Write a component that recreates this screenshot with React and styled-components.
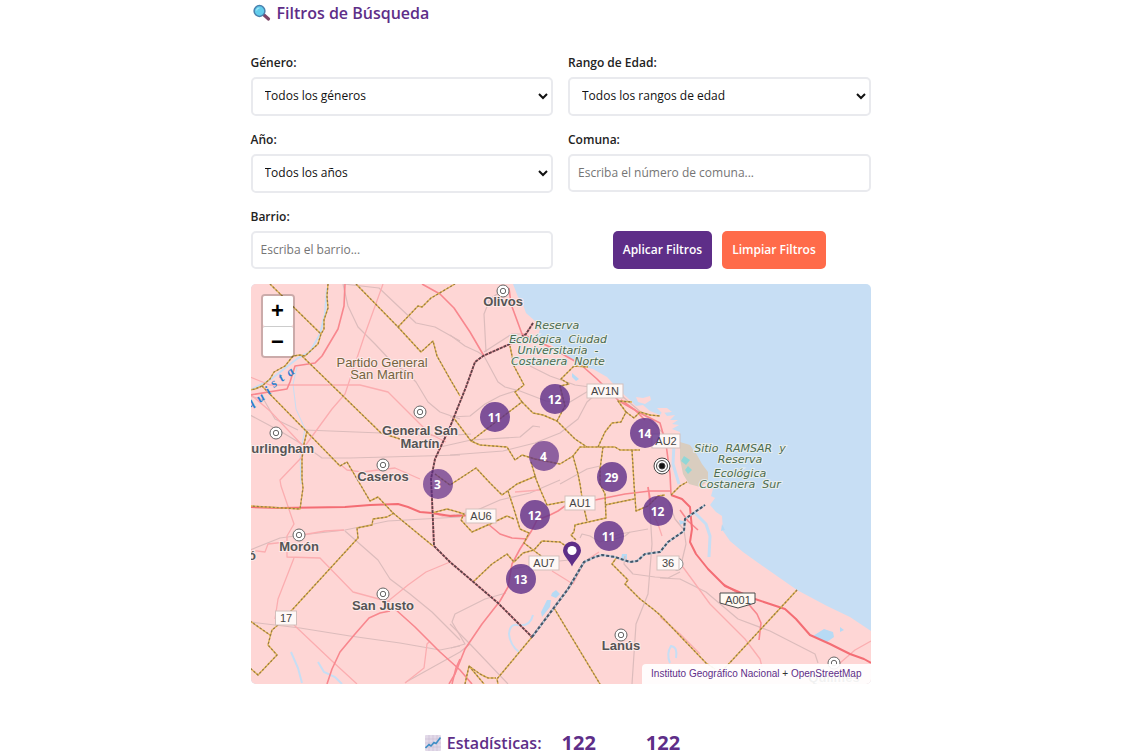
import React from 'react'
import styled, { createGlobalStyle } from 'styled-components'

const towns = [
  { x: 252, y: 7, lines: [['Olivos', 252, 22]] },
  { x: 169, y: 128, lines: [['General San', 169, 151], ['Martín', 169, 164]] },
  { x: 132, y: 181, lines: [['Caseros', 132, 197]] },
  { x: 25, y: 149, lines: [['Hurlingham', 27, 169]] },
  { x: 48, y: 251, lines: [['Morón', 48, 267]] },
  { x: 132, y: 310, lines: [['San Justo', 132, 326]] },
  { x: 370, y: 351, lines: [['Lanús', 370, 366]] },
  { x: 583, y: 379, lines: [['Quilmes', 583, 398]] }
]

const reserves = [
  ['Reserva', 307, 45],
  ['Ecológica  Ciudad', 308, 59],
  ['Universitaria  -', 308, 70],
  ['Costanera  Norte', 308, 81],
  ['Sitio  RAMSAR  y', 490, 168],
  ['Reserva', 490, 179],
  ['Ecológica', 490, 193],
  ['Costanera  Sur', 490, 204]
]

const shields = [
  { text: 'AV1N', x: 355, y: 107, width: 36 },
  { text: 'AU2', x: 416, y: 157, width: 28 },
  { text: 'AU1', x: 330, y: 219, width: 30 },
  { text: 'AU6', x: 231, y: 232, width: 30 },
  { text: 'AU7', x: 294, y: 279, width: 30 },
  { text: '17', x: 36, y: 334, width: 21 },
  { text: '36', x: 418, y: 279, width: 22 }
]

const river = [
  ['q', 0, 124],
  ['u', 10, 119],
  ['i', 19, 111],
  ['s', 24, 104],
  ['t', 32, 98],
  ['a', 40, 93]
]

const clusters = [
  { count: 12, x: 305, y: 115 },
  { count: 11, x: 245, y: 133 },
  { count: 4, x: 294, y: 172, light: true },
  { count: 14, x: 395, y: 149 },
  { count: 3, x: 188, y: 200, light: true },
  { count: 29, x: 362, y: 193 },
  { count: 12, x: 285, y: 231 },
  { count: 12, x: 408, y: 227 },
  { count: 11, x: 359, y: 252 },
  { count: 13, x: 271, y: 295 }
]

const rails = [
  'M93 0L98 22L108 43L125 60L140 76L158 90L166 98L178 118L190 128L210 135',
  'M93 0L129 4L148 22L166 39L185 43L210 57',
  'M200 51L215 62L228 68L234 72',
  'M236 68L234 30L240 15L250 8',
  'M234 68L262 50L275 50',
  'M234 72L248 98L255 103L270 107L296 117L320 118L340 106L355 112',
  'M0 131L30 147L55 162L72 174L100 174L210 171',
  'M0 112L14 116L25 135L48 146',
  'M55 146L131 149L190 152L221 150',
  'M200 133L220 132L235 120L250 112L265 107',
  'M190 163L221 156L270 153L283 142L290 143',
  'M200 171L253 167L285 159L310 149L328 135L337 118L355 102',
  'M280 82L300 92L325 101L355 105L372 112L400 136L414 150',
  'M310 200L337 185L350 182',
  'M0 266L30 254L60 250L95 246L138 237L210 233',
  'M200 232L225 227L250 216L280 209L310 196',
  'M95 247L128 276L140 295L160 310L182 328L210 356',
  'M0 338L50 344L100 352L150 359L190 366L210 362',
  'M156 398L210 368L220 360',
  'M256 309L235 315L205 330L202 338L215 360L201 364',
  'M200 340L220 360L258 400',
  'M330 254L332 250L340 252L350 258L370 250L398 245',
  'M355 258L375 252L380 248',
  'M399 210L402 260L398 310L386 340L382 400',
  'M375 272L374 280L383 290L405 293L418 294L430 288',
  'M410 211L418 216L425 235L434 246L436 260L430 285',
  'M410 294L430 295L456 308L488 335L520 347L565 370L568 379',
  'M262 285L300 278L319 276L324 270'
]

const minorRoads = [
  'M133 0L115 50L95 110L82 125L55 162',
  'M0 93L20 101L110 101L138 108L160 130L180 150L196 158',
  'M0 110L20 127L53 162',
  'M55 162L51 174L30 196L31 202L44 240L37 252L37 273L70 274L103 308L140 318',
  'M44 274L28 315L25 335',
  'M44 341L82 377L107 400',
  'M137 318L158 301L176 288L200 278',
  'M155 399L174 384L177 360L180 357',
  'M91 181L97 186L112 188L145 184L170 195',
  'M52 251L75 247L94 246',
  'M0 266L15 268L18 260L36 258',
  'M302 287L315 295L323 300L334 278L349 268',
  'M430 279L460 320L495 355L510 375L512 383',
  'M410 333L430 350L450 370',
  'M590 379L605 366L621 357',
  'M205 231L192 232L182 229',
  'M290 206L265 208',
  'M412 252L408 240L400 225L398 203'
]

const majorRoads = [
  'M172 0L190 10L204 24L220 48L234 72',
  'M259 4L261 20L272 50L300 63L330 80L347 95L369 117L392 130L410 139L416 160L420 190L421 210',
  'M95 0L94 22L88 45L72 72L65 79L45 82L40 98L37 105L0 111',
  'M371 116L385 126L395 136',
  'M238 240L250 250L262 254L277 255',
  'M282 246L287 236L300 231L308 227L315 222L345 216L375 210L400 207L421 207',
  'M282 246L270 265L262 280L258 303L250 317L232 340L215 365L205 390L199 400',
  'M140 327L130 329L119 334L105 350L90 368L82 385L77 400',
  'M145 325L165 343L190 368L210 386L222 400',
  'M210 375L206 384L202 400',
  'M398 203L401 220',
  'M430 226L438 237L448 246',
  'M473 300L490 310L507 330L511 339L509 356'
]

const highways = [
  'M0 223L30 224L95 223L120 221L148 220L158 223L170 228L182 229L200 232L232 231',
  'M421 211L432 215L440 223L442 245L440 258L446 270L458 285L475 302L505 315L535 325L546 335L560 351L580 360L600 370L614 375L621 379'
]

const boundaries = [
  'M20 0L71 50',
  'M78 0L77 12L78 24L74 36L74 45L71 50L68 60L55 72L50 71L43 72L35 82L24 88L20 95L12 102L5 105L0 106',
  'M52 72L131 149L150 155',
  'M12 102L57 148L90 182L97 178L110 200L120 217L128 213L143 229L183 262',
  'M57 147L54 160L52 175L52 195L53 204L50 225L0 222',
  'M106 0L148 43L171 68L183 57L187 72L200 95L210 112',
  'M148 43L168 22L172 23L181 14L205 0',
  'M144 229L137 233L123 235L122 241L107 244L108 254L42 326L28 341L22 346L20 353L18 361L27 371L8 391L0 384',
  'M0 337L20 351',
  'M182 229L197 225L208 228L214 230L211 236L222 248L240 240L257 232L264 235',
  'M203 133L221 157L230 161L257 163L265 176L272 171L285 175L310 180L323 172L330 163L365 163L370 166L390 166',
  'M221 157L272 118L265 108L274 101L264 82L260 62',
  'M272 118L283 129L293 131L307 137L325 155L337 163',
  'M307 137L315 122L310 102L319 100L311 95L324 82L338 83',
  'M348 163L355 148L362 139L371 138L376 128L368 117L382 118',
  'M376 128L384 134L390 128L400 131L410 132',
  'M353 163L350 185L350 200L355 210L356 234L325 241L324 248L321 251L326 256',
  'M382 166L384 200L386 227L398 222L408 212L415 211',
  'M323 172L328 190L330 200L333 220L337 237',
  'M281 178L286 195L290 205L297 221L313 218L340 214',
  'M185 190L200 201L226 184L240 199L252 211L267 200L286 192',
  'M258 207L263 222L270 245L279 249L274 259L295 275',
  'M223 298L242 280L257 270L264 278L273 269L284 266L292 257L310 258L320 265',
  'M355 221L384 215',
  'M421 211L430 202L437 198',
  'M367 273L362 280L378 296L375 300L390 315L403 325L410 331L456 379L465 385',
  'M282 353L247 395L248 400',
  'M304 324L350 400',
  'M547 306L474 385',
  'M215 400L219 382L230 390L238 394L246 394',
  'M219 382L234 400'
]

const cityLimit = 'M283 39L276 50L260 60L233 72L225 78L216 103L200 143L185 175L181 195L182 215L184 262L200 278L248 319L282 353L318 305L334 278'
const cityRiver = 'M282 353L318 305L334 278L345 273L352 271L365 273L380 278L387 277L395 270L410 268L418 258L434 247L435 235L455 221'

export default function App() {
  return (
    <Page>
      <GlobalStyle />
      <Container>
        <Title>
          <SearchIcon />
          Filtros de Búsqueda
        </Title>
        <Filters onSubmit={e => e.preventDefault()}>
          <Field>
            <Label htmlFor="genero">Género:</Label>
            <Select id="genero">
              <option>Todos los géneros</option>
            </Select>
          </Field>
          <Field>
            <Label htmlFor="edad">Rango de Edad:</Label>
            <Select id="edad">
              <option>Todos los rangos de edad</option>
            </Select>
          </Field>
          <Field>
            <Label htmlFor="anio">Año:</Label>
            <Select id="anio">
              <option>Todos los años</option>
            </Select>
          </Field>
          <Field>
            <Label htmlFor="comuna">Comuna:</Label>
            <Input id="comuna" placeholder="Escriba el número de comuna..." />
          </Field>
          <Field>
            <Label htmlFor="barrio">Barrio:</Label>
            <Input id="barrio" placeholder="Escriba el barrio..." />
          </Field>
          <Actions>
            <Button type="submit">Aplicar Filtros</Button>
            <Button type="reset" $secondary>Limpiar Filtros</Button>
          </Actions>
        </Filters>
        <MapBox>
          <Tiles />
          {clusters.map((c, i) => (
            <Cluster key={i} $x={c.x - 311} $y={c.y - 200} $light={c.light}>{c.count}</Cluster>
          ))}
          <Pin />
          <ZoomControl>
            <ZoomButton aria-label="Acercar">+</ZoomButton>
            <ZoomButton aria-label="Alejar">−</ZoomButton>
          </ZoomControl>
          <Attribution>
            <a href="#ign">Instituto Geográfico Nacional</a> + <a href="#osm">OpenStreetMap</a>
          </Attribution>
        </MapBox>
        <Stats>
          <StatsTitle>
            <ChartIcon />
            Estadísticas:
          </StatsTitle>
          <StatsNumbers>
            <strong>122</strong>
            <strong>122</strong>
          </StatsNumbers>
        </Stats>
      </Container>
    </Page>
  )
}

function SearchIcon() {
  return (
    <svg width="18" height="18" viewBox="0 0 18 18" aria-hidden="true">
      <path d="M11 11L15.5 15" stroke="#7d4668" strokeWidth="3.2" strokeLinecap="round" />
      <circle cx="6.5" cy="7" r="5.4" fill="#62cdec" stroke="#4a80ad" strokeWidth="1.5" />
      <path d="M3.5 6.5Q4 4 6.5 4" fill="none" stroke="#a5e6f7" strokeWidth="1.2" />
    </svg>
  )
}

function ChartIcon() {
  return (
    <svg width="16" height="16" viewBox="0 0 16 16" aria-hidden="true">
      <rect width="16" height="16" rx="1" fill="#e2d9e8" />
      <path d="M0 4H16M0 8H16M0 12H16M4 0V16M8 0V16M12 0V16" stroke="#cbbdd5" strokeWidth="0.6" />
      <path d="M0.5 13L4 9.5L6 11L9 7.5L11 8.5L15.5 2.5" fill="none" stroke="#3f8fc6" strokeWidth="1.6" />
    </svg>
  )
}

function Pin() {
  return (
    <PinButton aria-label="Ubicación">
      <svg width="20" height="26" viewBox="0 0 20 26" aria-hidden="true">
        <path d="M10 25.5C8 20 1 15 1 9.5A9 9 0 0 1 19 9.5C19 15 12 20 10 25.5Z" fill="#5e2e88" />
        <circle cx="10" cy="9.5" r="4.6" fill="#fff" />
      </svg>
    </PinButton>
  )
}

function Tiles() {
  return (
    <TileSvg viewBox="1 0 620 400" preserveAspectRatio="xMidYMid slice">
      <rect x="-400" y="-200" width="1421" height="800" fill="#c7def4" />
      <path
        fill="#fed6d5"
        d="M-400-200H263V0L268 13L272 18L276 29L285 37L291 41L288 52L303 62L318 73L330 82L343 85L357 93L370 107L380 116L386 122L393 121L400 127L410 131L413 127L417 132L425 131L420 136L428 136L422 140L429 141L422 145L430 148L430 160L434 185L442 196L458 199L463 205L461 212L465 214L460 221L466 228L472 232L473 247L480 257L493 268L517 285L547 306L577 322L600 333L621 347V600H-400Z"
      />
      <path d="M386 113L393 114L400 112L401 116L395 120L388 118ZM407 124L417 124L422 128L412 129Z" fill="#fed6d5" />
      <path d="M430 158L440 161L447 171L452 180L458 188L458 197L450 203L439 200L433 190L430 175Z" fill="#d9cdbf" />
      <path d="M434 172L440 176L436 181L431 177ZM438 182L442 186L438 190L435 186Z" fill="#91d7d7" />
      <g fill="none" stroke="#c7def4" strokeWidth="2">
        <path d="M77 4L75 30L70 50L60 68L48 74L20 96L0 106" />
        <path d="M47 83L43 100L46 125L55 145L50 172L51 200" strokeWidth="1" />
        <path d="M283 331Q280 343 268 341Q260 339 259 350Q260 361 269 368" />
        <path d="M41 368L48 384L52 399M68 378L74 388L85 393L92 400" />
        <path d="M444 228L456 240L460 252L459 273" strokeWidth="3" />
        <path d="M424 160L423 180L429 200" strokeWidth="3" />
        <path d="M420 379Q416 370 421 362Q428 363 426 374" />
      </g>
      <g fill="#b7daf4">
        <path d="M302 309L306 306L310 310L306 314L301 312ZM297 316L301 316L300 323L296 328L292 333L291 328Z" />
        <path d="M322 89L329 95L326 97L322 93ZM372 270L377 270L377 275L371 275ZM429 236L436 238L430 241Z" />
        <path d="M563 352L574 345L583 348L584 353L577 358ZM590 343L594 346L590 348ZM472 240L475 246L471 247Z" />
      </g>
      <g fill="none" strokeLinejoin="round">
        {rails.map(d => <path key={d} d={d} stroke="#dcbcbc" strokeWidth="1.2" />)}
        {minorRoads.map(d => <path key={d} d={d} stroke="#fbadb0" strokeWidth="1.3" />)}
        {majorRoads.map(d => <path key={d} d={d} stroke="#f8878e" strokeWidth="1.6" />)}
        {highways.map(d => <path key={d} d={d} stroke="#f46d74" strokeWidth="2" />)}
        {boundaries.map(d => (
          <g key={d}>
            <path d={d} stroke="#dfb14f" strokeWidth="1.4" />
            <path d={d} stroke="#957a48" strokeWidth="1.2" strokeDasharray="2 2" />
          </g>
        ))}
        <path d={cityLimit} stroke="#f39aa1" strokeWidth="2" />
        <path d={cityLimit} stroke="#5b4248" strokeWidth="1.8" strokeDasharray="3 1" />
        <path d={cityRiver} stroke="#b9cbd9" strokeWidth="2" />
        <path d={cityRiver} stroke="#42566a" strokeWidth="2" strokeDasharray="3 2" />
      </g>
      {towns.map(t => (
        <g key={t.lines[0][0]}>
          <circle cx={t.x + 1} cy={t.y} r="6" fill="#fff" stroke="#666" />
          <circle cx={t.x + 1} cy={t.y} r="2.7" fill="none" stroke="#666" />
          {t.lines.map(([text, x, y]) => <Town key={text} x={x + 1} y={y}>{text}</Town>)}
        </g>
      ))}
      <Town x="2" y="276">ó</Town>
      <Party x="132" y="83">Partido General</Party>
      <Party x="132" y="95">San Martín</Party>
      {reserves.map(([text, x, y]) => <Reserve key={y} x={x} y={y}>{text}</Reserve>)}
      {river.map(([text, x, y]) => (
        <River key={text} transform={`translate(${x} ${y}) rotate(-38)`}>{text}</River>
      ))}
      <circle cx="427" cy="280" r="6" fill="#fff" stroke="#888" />
      {shields.map(s => (
        <g key={s.text}>
          <rect x={s.x - s.width / 2} y={s.y - 7} width={s.width} height="14" fill="#fff8f6" stroke="#d3bfbc" />
          <Shield x={s.x} y={s.y + 4}>{s.text}</Shield>
        </g>
      ))}
      <path d="M470 309H505V319L488 324L470 319Z" fill="#fffaf3" stroke="#4b4b4b" />
      <Shield x="488" y="320">A001</Shield>
      <g stroke="#444">
        <circle cx="412" cy="182" r="8" fill="#fff" />
        <circle cx="412" cy="182" r="5.5" fill="#fff" />
        <circle cx="412" cy="182" r="3" fill="#111" />
      </g>
    </TileSvg>
  )
}

const GlobalStyle = createGlobalStyle`
  * {
    box-sizing: border-box;
  }

  body {
    margin: 0;
    background: #fff;
    font-family: 'Open Sans', sans-serif;
    font-size: 12px;
    color: #222;
  }
`

const Page = styled.main`
  display: flex;
  justify-content: center;
  padding: 0 18px 0 8px;
`

const Container = styled.div`
  width: 100%;
  max-width: 620px;
`

const Title = styled.h2`
  display: flex;
  align-items: center;
  gap: 6px;
  margin: 0 0 28px;
  padding-left: 2px;
  font-size: 16px;
  font-weight: 600;
  line-height: 26px;
  color: #5e2e88;
`

const Filters = styled.form`
  display: grid;
  grid-template-columns: 1fr 1fr;
  gap: 15px;
  margin-bottom: 15px;

  @media screen and (max-width: 560px) {
    grid-template-columns: 1fr;
  }
`

const Field = styled.div`
  display: flex;
  flex-direction: column;
  gap: 5px;
`

const Label = styled.label`
  font-weight: 600;
  line-height: 18px;
`

const Input = styled.input`
  width: 100%;
  height: 38px;
  padding: 7px 8px 9px;
  border: 2px solid #e9eaee;
  border-radius: 5px;
  background: #fff;
  font-family: inherit;
  font-size: 12px;
  font-weight: 400;
  color: #111;

  &::placeholder {
    color: #757575;
  }
`

const Select = styled(Input).attrs({ as: 'select' })`
  height: 39px;
`

const Actions = styled.div`
  display: flex;
  justify-content: center;
  align-items: flex-end;
  gap: 10px;
`

const Button = styled.button`
  height: 38px;
  padding: 0 10px 2px;
  border: 0;
  border-radius: 5px;
  background: ${props => (props.$secondary ? '#ff6b4a' : '#5e2e88')};
  color: #fff;
  font-family: inherit;
  font-size: 12px;
  font-weight: 600;
  cursor: pointer;
`

const MapBox = styled.section`
  position: relative;
  height: 400px;
  overflow: hidden;
  border-radius: 5px;
`

const TileSvg = styled.svg`
  display: block;
  width: 100%;
  height: 100%;
`

const Town = styled.text`
  font: bold 13px 'Liberation Sans', sans-serif;
  text-anchor: middle;
  fill: #555;
  stroke: #fde9e8;
  stroke-width: 2px;
  paint-order: stroke;
`

const Party = styled(Town)`
  font-weight: normal;
  fill: #75643f;
`

const Reserve = styled.text`
  font: italic 11px 'DejaVu Sans', sans-serif;
  text-anchor: middle;
  white-space: pre;
  fill: #4b6b50;
  stroke: #e8eeec;
  stroke-width: 2px;
  paint-order: stroke;
`

const River = styled.text`
  font: italic bold 13px 'Liberation Serif', serif;
  fill: #2d7fcf;
`

const Shield = styled.text`
  font: 11px 'Liberation Sans', sans-serif;
  text-anchor: middle;
  fill: #444;
`

const Cluster = styled.button`
  position: absolute;
  top: calc(50% + ${props => props.$y}px - 15px);
  left: calc(50% + ${props => props.$x}px - 15px);
  width: 30px;
  height: 30px;
  padding: 0;
  border: 0;
  border-radius: 50%;
  background: ${props => (props.$light ? 'rgba(94, 46, 136, 0.7)' : 'rgba(94, 46, 136, 0.8)')};
  color: #fff;
  font: bold 12px 'Open Sans', sans-serif;
  cursor: pointer;
`

const PinButton = styled.button`
  position: absolute;
  top: calc(50% + 57px);
  left: calc(50% + 1px);
  padding: 0;
  border: 0;
  background: none;
  cursor: pointer;

  svg {
    display: block;
  }
`

const ZoomControl = styled.div`
  position: absolute;
  top: 10px;
  left: 10px;
  border: 2px solid rgba(0, 0, 0, 0.2);
  border-radius: 4px;
  background-clip: padding-box;
`

const ZoomButton = styled.button`
  display: block;
  width: 30px;
  height: 30px;
  padding: 0;
  border: 0;
  border-radius: 2px;
  background: #fff;
  color: #000;
  font: bold 22px/30px 'Liberation Sans', sans-serif;
  cursor: pointer;

  & + & {
    border-top: 1px solid #ccc;
  }
`

const Attribution = styled.div`
  position: absolute;
  right: 0;
  bottom: 0;
  padding: 0 9px;
  border-top-left-radius: 4px;
  background: rgba(255, 255, 255, 0.92);
  font: 10px/20px 'Liberation Sans', sans-serif;
  color: #333;

  a {
    color: #5e2e88;
    text-decoration: none;
  }
`

const Stats = styled.div`
  display: flex;
  justify-content: center;
  align-items: center;
  gap: 20px;
  height: 24px;
  margin-top: 47px;
  padding-right: 16px;
  color: #5e2e88;
`

const StatsTitle = styled.h3`
  display: flex;
  align-items: center;
  gap: 6px;
  margin: 0;
  font-size: 16px;
  font-weight: 600;
`

const StatsNumbers = styled.div`
  display: flex;
  gap: 50px;
  font-size: 20px;
  line-height: 24px;
`
